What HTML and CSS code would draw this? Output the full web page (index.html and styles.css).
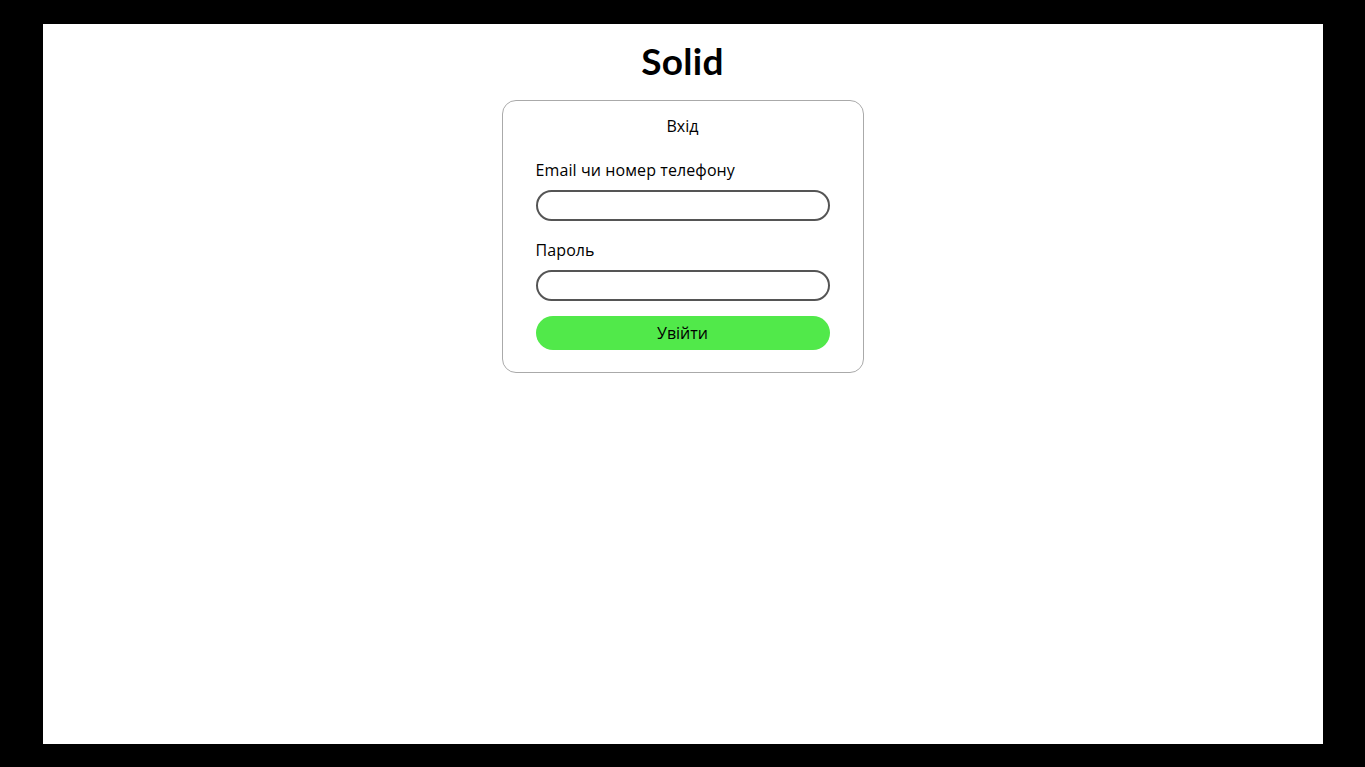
FILE: index.html
```html
<!DOCTYPE html>
<html lang="uk">
<head>
<meta charset="utf-8">
<title>Solid</title>
<link rel="stylesheet" href="styles.css">
</head>
<body>
<div class="screen">
  <h1 class="logo">Solid</h1>
  <form class="card">
    <div class="card-title">Вхід</div>
    <label class="field-label" for="login">Email чи номер телефону</label>
    <input class="field-input" id="login" type="text">
    <label class="field-label field-label-second" for="pass">Пароль</label>
    <input class="field-input" id="pass" type="password">
    <button class="submit" type="button">Увійти</button>
  </form>
</div>
</body>
</html>
```

FILE: styles.css
```css
html, body {
  margin: 0;
  padding: 0;
  height: 100%;
}
body {
  background: #000;
  display: flex;
  align-items: center;
  justify-content: center;
  font-family: "Open Sans", "Noto Sans", sans-serif;
  color: #000;
}
.screen {
  width: 1280px;
  height: 720px;
  background: #fff;
  display: flex;
  flex-direction: column;
  align-items: center;
}
.logo {
  margin: 14px 0 0;
  height: 46px;
  font-family: "Lato", "Liberation Sans", sans-serif;
  font-weight: 700;
  font-size: 37px;
  line-height: 46px;
  letter-spacing: 0.3px;
}
.card {
  margin-top: 16px;
  width: 294px;
  padding: 14px 33px 22px;
  border: 1px solid #aaa;
  border-radius: 14px;
  display: flex;
  flex-direction: column;
}
.card-title {
  text-align: center;
  font-size: 16px;
  line-height: 22px;
}
.field-label {
  margin-top: 22px;
  font-size: 16px;
  line-height: 22px;
  letter-spacing: 0.1px;
}
.field-label-second {
  margin-top: 18px;
}
.field-input {
  margin-top: 9px;
  box-sizing: border-box;
  width: 294px;
  height: 31px;
  border: 2px solid #555;
  border-radius: 16px;
  padding: 0 12px;
  font: inherit;
  outline: none;
}
.submit {
  margin-top: 15px;
  height: 34px;
  border: none;
  border-radius: 17px;
  background: #51e94a;
  font-family: "Open Sans", "Noto Sans", sans-serif;
  font-size: 16px;
  color: #000;
  padding: 0;
}
```
